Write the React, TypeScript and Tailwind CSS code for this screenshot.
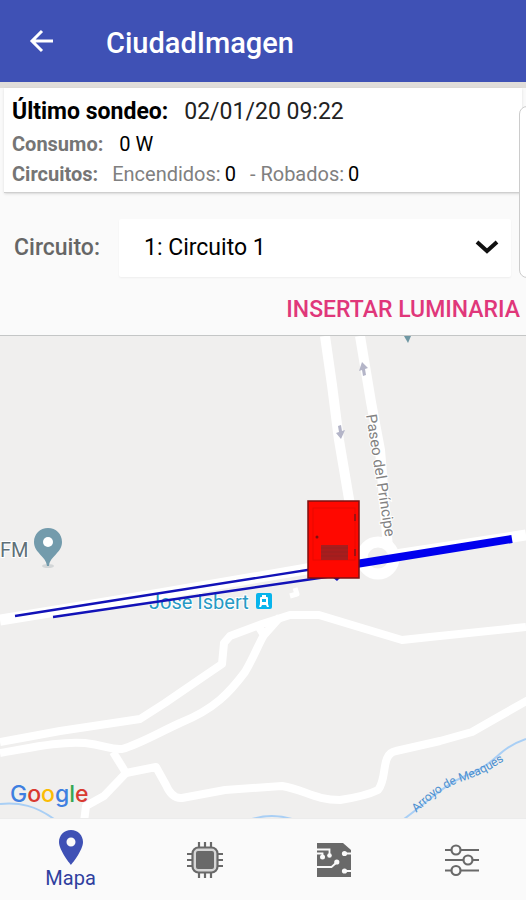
import { useState } from 'react'

const ROADS = [
  { d: 'M0 620 L160 594 L330 565 L526 535', width: 11 },
  { d: 'M325 336 L332 385 L339 440 L350 505', width: 10 },
  { d: 'M360 336 L371 402 L380 450 L388 548', width: 10 },
  { d: 'M0 742 L60 731 L140 719 L165 703 L200 679 L222 664 L224 643 L230 636 L262 624 L290 615 L319 615 L362 628 L402 640 L430 637 L526 627', width: 8 },
  { d: 'M0 753 C30 748 60 741 85 743 C105 745 110 750 122 749 C140 744 160 732 180 723 C215 709 230 692 245 672 C254 657 258 645 264 635 L280 617 M257 624 L264 635', width: 8 },
  { d: 'M113 752 L126 773 L104 796 L86 806 L84 822', width: 8 },
  { d: 'M126 773 L156 767 L166 785 Q172 799 182 798 L225 790 L282 786 C305 790 315 800 340 800 C360 797 372 793 378 790 C388 778 380 754 396 751 L440 741 L472 732 L500 716 L530 699', width: 8 },
  { d: 'M295 588 L297 594 L290 596', width: 5 },
]

const STREAMS = [
  'M0 804 C20 802 36 806 54 819',
  'M252 819 Q272 813 292 819',
  'M404 819 C430 800 444 785 465 776 C500 762 495 750 526 739',
]

const GOOGLE = [
  { letter: 'G', color: '#3f7fe0' },
  { letter: 'o', color: '#d93a30' },
  { letter: 'o', color: '#fbbc05' },
  { letter: 'g', color: '#3f7fe0' },
  { letter: 'l', color: '#34a853' },
  { letter: 'e', color: '#d93a30' },
]

function BackIcon() {
  return (
    <svg className="size-8" viewBox="0 0 32 32" fill="none" stroke="currentColor" strokeWidth="3">
      <path d="M27 16H6M16 6L6 16l10 10" />
    </svg>
  )
}

function PinIcon() {
  return (
    <svg className="h-9 w-6" viewBox="0 0 24 36" fill="currentColor" fillRule="evenodd">
      <path d="M12 0C5 0 0 5.500 0 12c0 8.500 12 23 12 23s12-14.500 12-23C24 5.500 19 0 12 0Zm0 7.500a4.500 4.500 0 1 1 0 9 4.500 4.500 0 0 1 0-9Z" />
    </svg>
  )
}

function ChipIcon() {
  return (
    <svg className="size-9" viewBox="0 0 36 36" fill="none" stroke="currentColor" strokeWidth="2.200">
      <path d="M12 0v6M18 0v6M24 0v6M12 30v6M18 30v6M24 30v6M0 12h6M0 18h6M0 24h6M30 12h6M30 18h6M30 24h6" />
      <rect x="5.500" y="5.500" width="25" height="25" rx="6" fill="#d6d6d6" />
      <rect x="9" y="9" width="18" height="18" rx="2" fill="currentColor" stroke="none" />
    </svg>
  )
}

function BoardIcon() {
  return (
    <svg className="size-9" viewBox="0 0 36 36">
      <path d="M1 1h26l8 7v27H1Z" fill="currentColor" />
      <g fill="none" stroke="#fafafa" strokeWidth="1.800">
        <path d="M1 7.500h12.500v5M1 11.500h5.500v3M1 25h14.500l5-4.500M28 11.500h7M28 29h7" />
      </g>
      <g fill="#fafafa">
        <circle cx="6.500" cy="15" r="2.500" />
        <circle cx="13.500" cy="13.500" r="2.300" />
        <circle cx="20.800" cy="20" r="2.600" />
        <circle cx="28.500" cy="11.500" r="2.600" />
        <circle cx="28.500" cy="29" r="2.600" />
      </g>
    </svg>
  )
}

function SlidersIcon() {
  return (
    <svg className="size-9" viewBox="0 0 36 36" fill="#fafafa" stroke="currentColor" strokeWidth="2.200">
      <path d="M1 8h34M1 18h34M1 28.500h34" />
      <circle cx="12" cy="8" r="4.500" />
      <circle cx="24" cy="18" r="4.500" />
      <circle cx="12" cy="28.500" r="4.500" />
    </svg>
  )
}

function StreetMap() {
  return (
    <svg
      className="w-full flex-1 bg-[#f0efee] font-[Roboto,sans-serif]"
      viewBox="0 336 526 482"
      preserveAspectRatio="xMidYMid slice"
      role="img"
      aria-label="Mapa de luminarias"
    >
      <g fill="none" stroke="#a9cff5" strokeWidth="2">
        {STREAMS.map((d) => (
          <path key={d} d={d} />
        ))}
      </g>
      <g fill="none" stroke="#ffffff" strokeLinejoin="round">
        {ROADS.map((road) => (
          <path key={road.d} d={road.d} strokeWidth={road.width} />
        ))}
        <circle cx="378" cy="558" r="16" strokeWidth="11" fill="#f0efee" />
      </g>

      {/* one-way arrows */}
      <g fill="#b4b5c8">
        <path d="M362 362l6 6-3 1 1 6-3 1-1-6-3 1Z" />
        <path d="M341 439l-5-6 3-1-1-6 3-1 1 6 3-1Z" />
      </g>
      <path d="M404 336h7l-3 7Z" fill="#6f97a3" />

      {/* street and place names */}
      <g stroke="#ffffff" strokeWidth="2" paintOrder="stroke">
        <text transform="translate(366 415) rotate(81)" fontSize="15" fill="#828282">
          Paseo del Príncipe
        </text>
        <text x="0" y="557" fontSize="20" fill="#607078">
          FM
        </text>
        <text x="149" y="609" fontSize="20" fill="#269ac5">
          Jose Isbert
        </text>
      </g>
      <path id="arroyo" d="M416 813 C434 796 446 786 466 780 C480 775 490 770 502 762" fill="none" />
      <text fontSize="12" fill="#4c8fd0">
        <textPath href="#arroyo">Arroyo de Meaques</textPath>
      </text>

      {/* station */}
      <rect x="256" y="593" width="16" height="16" rx="2" fill="#08b4ec" />
      <path
        d="M262 595h4v2h1a1 1 0 0 1 1 1v6l1 3h-2l-1-2h-4l-1 2h-2l1-3v-6a1 1 0 0 1 1-1h1Z"
        fill="#ffffff"
      />
      <path d="M262 599h4v3h-4Z" fill="#08b4ec" />

      {/* place pin */}
      <ellipse cx="48" cy="566" rx="6" ry="2" fill="#d3d6d7" />
      <path
        d="M48 528c-8 0-14 6-14 14 0 11 12 14 13 24h2c1-10 13-13 13-24 0-8-6-14-14-14Z"
        fill="#739bac"
      />
      <circle cx="48" cy="542" r="5" fill="#ffffff" />

      {/* power lines */}
      <g fill="none" stroke="#1212b8">
        <path d="M15 616L320 568" strokeWidth="2.400" />
        <path d="M53 617L340 575" strokeWidth="2.400" />
        <path d="M350 565L512 539" strokeWidth="8" stroke="#0000ee" />
      </g>

      {/* electrical cabinet */}
      <path d="M332 577h9l-4 4Z" fill="#1212b8" />
      <rect x="308" y="501" width="51" height="77" fill="#ff0800" stroke="#7c1010" strokeWidth="1.500" />
      <rect x="313" y="508" width="42" height="52" fill="none" stroke="#e80800" />
      <rect x="321" y="545" width="27" height="15" fill="#a81d1d" />
      <path d="M321 548h27M321 552h27M321 556h27" stroke="#982020" />
      <path d="M355 514v7M355 549v7" stroke="#a01010" strokeWidth="2" />
      <circle cx="317" cy="537" r="1.500" fill="#7c1010" />

      <text x="10" y="802" fontSize="23" className="font-[Inter,sans-serif] font-medium">
        {GOOGLE.map((g, i) => (
          <tspan key={i} fill={g.color}>
            {g.letter}
          </tspan>
        ))}
      </text>
    </svg>
  )
}

const TABS = [
  { id: 'mapa', label: 'Mapa', Icon: PinIcon },
  { id: 'equipos', label: 'Equipos', Icon: ChipIcon },
  { id: 'placas', label: 'Placas', Icon: BoardIcon },
  { id: 'ajustes', label: 'Ajustes', Icon: SlidersIcon },
]

export default function App() {
  const [tab, setTab] = useState('mapa')
  const [circuit, setCircuit] = useState('1')

  return (
    <div className="flex min-h-screen flex-col overflow-hidden bg-[#fafafa] font-[Roboto,sans-serif] text-black">
      <header className="flex h-[82px] items-center gap-12 bg-[#3f51b5] px-[26px] text-white">
        <button type="button" aria-label="Volver">
          <BackIcon />
        </button>
        <h1 className="pt-1 text-[29px] leading-8 font-medium">CiudadImagen</h1>
      </header>

      <main className="flex flex-1 flex-col">
        <section className="relative border-b border-[#c4c6c6] pb-[9px]">
          <div className="border-t-6 border-[#e0ddda] px-1">
            <div className="border-b border-[#cfcfcf] bg-white px-2 pt-2 pb-1 shadow-sm">
              <p className="flex gap-4 text-[23px] leading-8">
                <strong className="font-bold">Último sondeo:</strong>
                <span className="text-[#222]">02/01/20 09:22</span>
              </p>
              <p className="flex gap-4 text-xl leading-8">
                <strong className="font-bold text-[#757575]">Consumo:</strong>
                <span>0 W</span>
              </p>
              <p className="flex text-xl leading-7 text-[#808080]">
                <strong className="mr-[14px] font-bold text-[#757575]">Circuitos:</strong>
                Encendidos:
                <span className="mr-[14px] ml-1 text-black">0</span>
                - Robados:
                <span className="ml-1 text-black">0</span>
              </p>
            </div>
          </div>

          <div className="mt-[26px] flex items-center gap-[19px] pr-[15px] pl-[14px]">
            <label htmlFor="circuito" className="text-[23px] font-medium text-[#666]">
              Circuito:
            </label>
            <div className="relative flex-1">
              <select
                id="circuito"
                value={circuit}
                onChange={(e) => setCircuit(e.target.value)}
                className="h-[58px] w-full appearance-none rounded-xs bg-white pr-12 pl-[25px] text-[23px] shadow-xs"
              >
                <option value="1">1: Circuito 1</option>
                <option value="2">2: Circuito 2</option>
              </select>
              <svg
                className="pointer-events-none absolute top-5 right-3 size-6"
                viewBox="0 0 24 24"
                fill="none"
                stroke="#111"
                strokeWidth="4"
              >
                <path d="M2 3l10 9 10-9" />
              </svg>
            </div>
          </div>

          <div className="mt-[17px] flex justify-end pr-[6px]">
            <button type="button" className="text-[23px] leading-8 font-medium text-[#e0377a]">
              INSERTAR LUMINARIA
            </button>
          </div>

          {/* edge of the next card */}
          <div className="absolute top-6 -right-1 h-[172px] w-[11px] rounded-l-lg border border-[#ccc] bg-white" />
        </section>

        <StreetMap />
      </main>

      <nav className="flex h-[82px] border-t border-[#ececec]">
        {TABS.map(({ id, label, Icon }) => (
          <button
            key={id}
            type="button"
            aria-label={label}
            onClick={() => setTab(id)}
            className={
              tab === id
                ? 'flex flex-[1.1] flex-col items-center justify-center text-[#3f51b5]'
                : 'flex flex-1 flex-col items-center justify-center text-[#696969]'
            }
          >
            <Icon />
            {tab === id && <span className="text-xl leading-6 text-[#303f9f]">{label}</span>}
          </button>
        ))}
      </nav>
    </div>
  )
}
